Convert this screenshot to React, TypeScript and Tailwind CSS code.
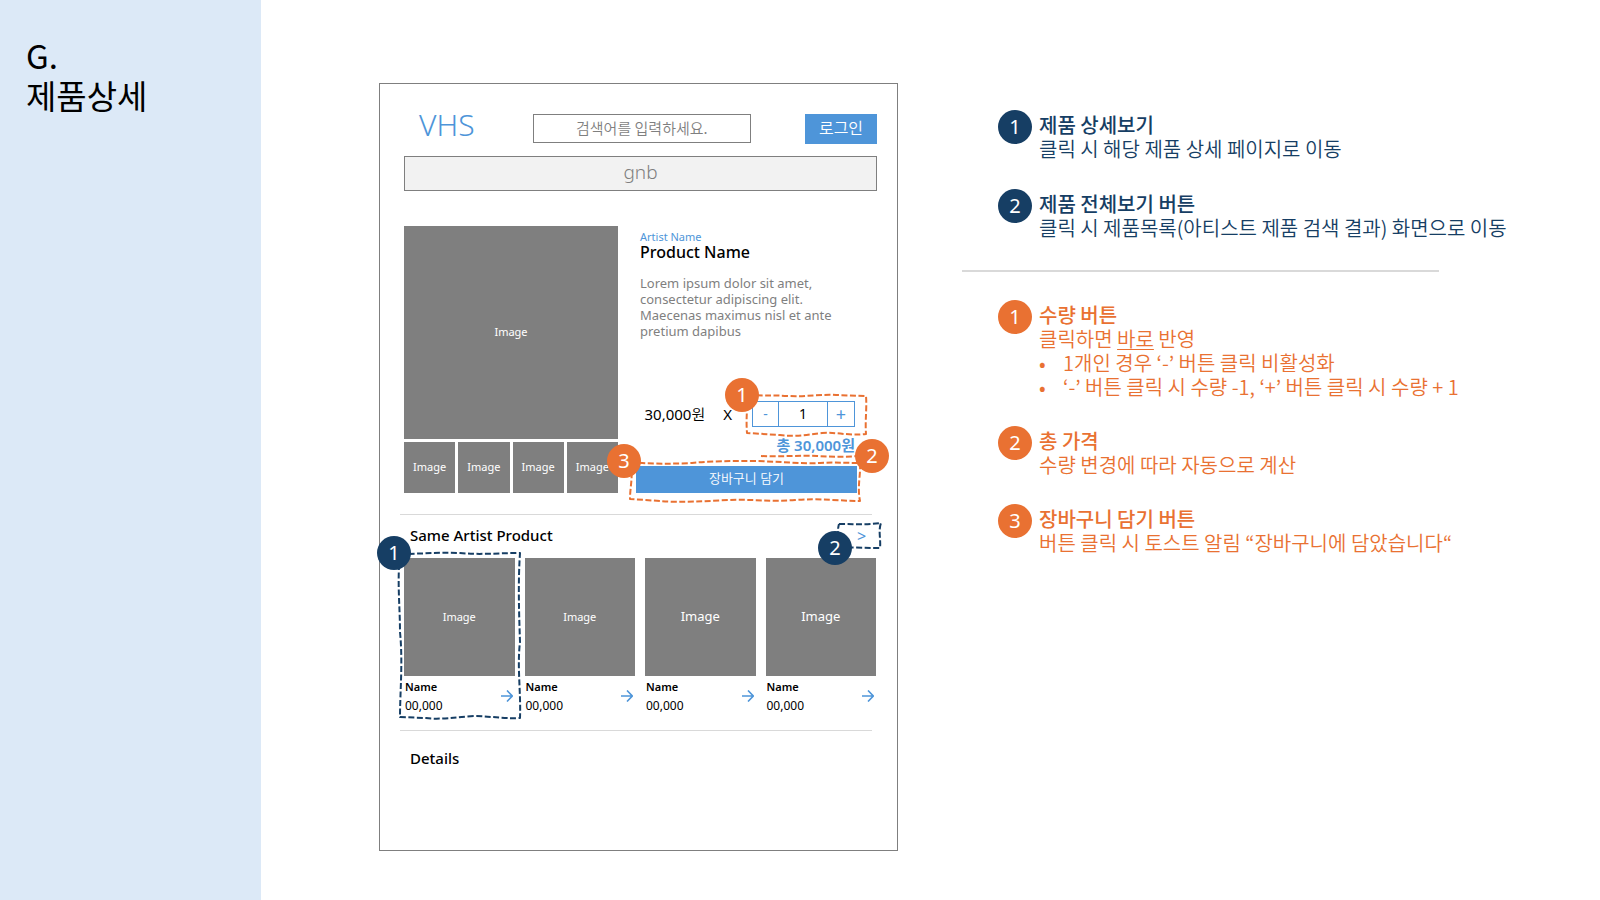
import type { ReactNode } from "react";

type Tone = "navy" | "orange";

const toneBg: Record<Tone, string> = { navy: "bg-[#163e64]", orange: "bg-[#e97132]" };
const toneText: Record<Tone, string> = { navy: "text-[#163e64]", orange: "text-[#e97132]" };
const latin = "font-['Noto_Sans','Noto_Sans_CJK_KR',sans-serif]";

function Badge({ n, tone, className = "" }: { n: number; tone: Tone; className?: string }) {
  return (
    <span
      className={`flex size-[34px] shrink-0 items-center justify-center rounded-full text-xl leading-none font-normal text-white ${latin} ${toneBg[tone]} ${className}`}
    >
      {n}
    </span>
  );
}

/* Hand-drawn dashed outline laid over the element it annotates. */
function Sketch({ d, w, h, tone, className }: { d: string; w: number; h: number; tone: Tone; className: string }) {
  return (
    <svg
      aria-hidden="true"
      viewBox={`0 0 ${w} ${h}`}
      preserveAspectRatio="none"
      className={`pointer-events-none absolute overflow-visible ${toneText[tone]} ${className}`}
    >
      <path d={d} fill="none" stroke="currentColor" strokeWidth="2" strokeDasharray="6 2.5" strokeLinejoin="round" />
    </svg>
  );
}

function Placeholder({ className = "" }: { className?: string }) {
  return <div className={`flex items-center justify-center bg-[#7f7f7f] text-white ${className}`}>Image</div>;
}

function Arrow() {
  return (
    <svg aria-hidden="true" viewBox="0 0 12 12" className="mr-px mb-[2px] size-3 text-[#4e95d9]">
      <path d="M0 6H11M6 0.5L11.3 6L6 11.5" fill="none" stroke="currentColor" strokeWidth="1.6" />
    </svg>
  );
}

function Note({ n, tone, title, children }: { n: number; tone: Tone; title: string; children: ReactNode }) {
  return (
    <li className={`flex items-start gap-[7px] ${toneText[tone]}`}>
      <Badge n={n} tone={tone} className="-mt-[3px]" />
      <div>
        <h3 className="font-medium">{title}</h3>
        {children}
      </div>
    </li>
  );
}

function Wireframe() {
  return (
    <section className="min-h-[768px] w-full max-w-[519px] border border-[#7f7f7f] bg-white pt-[30px] pr-5 pb-16 pl-6">
      <header className="flex items-start justify-between">
        <a href="#home" className={`ml-[15px] text-3xl leading-[22px] font-light text-[#4e95d9] ${latin}`}>
          VHS
        </a>
        <input
          aria-label="검색"
          placeholder="검색어를 입력하세요."
          className="ml-1 h-[29px] w-[218px] border border-[#7f7f7f] pb-[2px] text-center text-[15px] font-[350] placeholder:text-[#7f7f7f] placeholder:opacity-100"
        />
        <button className="h-[30px] w-[72px] bg-[#4e95d9] pb-1 text-base leading-6 font-[350] text-white">로그인</button>
      </header>
      <nav
        className={`mt-3 flex h-[35px] items-center justify-center border border-[#7f7f7f] bg-[#f2f2f2] pb-[2px] text-[19px] leading-none font-light text-[#7f7f7f] ${latin}`}
      >
        gnb
      </nav>

      <div className={`mt-[35px] flex gap-[18px] pr-5 ${latin}`}>
        <div className="flex w-[214px] shrink-0 flex-col gap-[3px] text-[11px]">
          <Placeholder className="h-[213px]" />
          <div className="grid grid-cols-4 gap-[3px]">
            <Placeholder className="h-[51px]" />
            <Placeholder className="h-[51px]" />
            <Placeholder className="h-[51px]" />
            <Placeholder className="h-[51px]" />
          </div>
        </div>
        <div className="flex flex-1 flex-col pt-1">
          <div className="pl-1">
            <p className="text-[11px] leading-[14px] text-[#4e95d9]">Artist Name</p>
            <h1 className="text-base leading-4 font-medium text-black">Product Name</h1>
            <p className="mt-[15px] max-w-[200px] text-[13px] leading-4 text-[#7f7f7f]">
              Lorem ipsum dolor sit amet, consectetur adipiscing elit. Maecenas maximus nisl et ante pretium dapibus
            </p>
          </div>
          <div className="mt-auto flex h-[26px] items-center justify-end pr-[2px] text-[15px] text-black">
            <span className="mr-[18px] font-[350]">
              <span className="font-normal">30,000</span>원
            </span>
            <span className="mr-5">X</span>
            <div className="relative flex h-[26px] border border-[#4e95d9] text-sm">
              <button aria-label="수량 감소" className="w-[25px] text-[#4e95d9]">
                -
              </button>
              <output className="flex w-[50px] items-center justify-center border-x border-[#4e95d9]">1</output>
              <button aria-label="수량 증가" className="w-[26px] text-lg leading-none text-[#4e95d9]">
                +
              </button>
              <Sketch
                tone="orange"
                w={121}
                h={42}
                className="-top-2 -left-[7px] h-[42px] w-[121px]"
                d="M2 1C20 2 28 1 42 2C60 3 75 0 90 1L120 2C121 14 119 26 120 40C102 42 92 38 76 39C60 41 50 43 34 41L1 39C0 26 1 16 2 1"
              />
              <Badge n={1} tone="orange" className="absolute -top-6 -left-7" />
            </div>
          </div>
          <p className="relative mt-2 self-end pr-[2px] text-[15px] leading-5 font-semibold text-[#4e95d9]">
            총 30,000원
            <Sketch
              tone="orange"
              w={100}
              h={4}
              className="-right-1 -bottom-[3px] h-1 w-[100px]"
              d="M0 2C20 3 40 1 56 2C72 3 84 3 100 2"
            />
            <Badge n={2} tone="orange" className="absolute top-1 -right-8 z-10" />
          </p>
          <div className="relative mt-[11px]">
            <button className="block h-[27px] w-full bg-[#4e95d9] pb-[2px] text-[13px] font-[350] text-white">
              장바구니 담기
            </button>
            <Sketch
              tone="orange"
              w={231}
              h={41}
              className="-top-[5px] -left-[6px] h-[41px] w-[231px]"
              d="M1 1C20 3 40 3 62 2C80 0 100 0 120 0C145 0 170 3 190 2C205 1 215 2 230 2C231 12 227 26 230 40C210 40 190 37 165 39C140 41 120 38 100 39C75 40 50 42 30 40L0 38C0 26 3 18 1 1"
            />
            <Badge n={3} tone="orange" className="absolute -top-[22px] -left-[29px]" />
          </div>
        </div>
      </div>

      <hr className="mt-[21px] mr-[5px] -ml-1 border-[#d9d9d9]" />

      <div className="mt-2 flex h-[25px] items-center justify-between">
        <h2 className={`ml-[6px] text-[15px] font-medium text-black ${latin}`}>Same Artist Product</h2>
        <div className="relative z-10 -mr-1 flex h-[25px] w-[43px]">
          <button aria-label="제품 전체보기" className={`w-full pl-1 text-base leading-none text-[#4e95d9] ${latin}`}>
            &gt;
          </button>
          <Sketch tone="navy" w={43} h={25} className="inset-0 size-full" d="M1 1C15 1 28 2 43 0C40 8 43 16 42 25C28 25 14 24 1 25C0 16 -1 8 1 1" />
          <Badge n={2} tone="navy" className="absolute top-2 -left-5" />
        </div>
      </div>

      <div className={`mt-[10px] mr-px grid grid-cols-4 gap-[10px] ${latin}`}>
        {[0, 1, 2, 3].map((i) => (
          <a key={i} href="#product" className="relative block text-black">
            <Placeholder className={`h-[118px] ${i < 2 ? "text-[11px]" : "text-[13px]"}`} />
            <div className="flex items-center justify-between px-px pt-1">
              <div>
                <p className="text-[11px] leading-[14px] font-semibold">Name</p>
                <p className="mt-[5px] text-xs leading-[14px]">00,000</p>
              </div>
              <Arrow />
            </div>
            {i === 0 && (
              <>
                <Sketch
                  tone="navy"
                  w={123}
                  h={165}
                  className="-top-[6px] -left-[6px] h-[165px] w-[123px]"
                  d="M2 2C22 2 40 0 62 1C82 3 100 1 122 1C120 30 121 60 122 90C119 115 123 140 122 166C104 167 92 164 76 164C58 165 42 168 28 166L2 165C2 140 5 110 2 80C2 54 -1 30 2 2"
                />
                <Badge n={1} tone="navy" className="absolute -top-[22px] -left-[27px]" />
              </>
            )}
          </a>
        ))}
      </div>

      <hr className="mt-[17px] mr-[5px] -ml-1 border-[#d9d9d9]" />
      <h2 className={`mt-4 ml-[6px] text-[15px] leading-[22px] font-medium text-black ${latin}`}>Details</h2>
    </section>
  );
}

export default function App() {
  return (
    <div className="flex min-h-screen bg-white font-['Noto_Sans_CJK_KR','Noto_Sans',sans-serif]">
      <aside className="w-[261px] shrink-0 bg-[#dce9f7] px-[26px] pt-[35px] text-[33px] leading-10 text-black">
        <h1>
          G.
          <br />
          제품상세
        </h1>
      </aside>
      <main className="flex flex-1 items-start gap-16 pt-[83px] pl-[118px]">
        <Wireframe />
        <div className="flex-1 shrink-0 pt-[30px] text-xl leading-6 font-[350] whitespace-nowrap">
          <ul className="flex flex-col gap-[31px] pl-9">
            <Note n={1} tone="navy" title="제품 상세보기">
              <p>클릭 시 해당 제품 상세 페이지로 이동</p>
            </Note>
            <Note n={2} tone="navy" title="제품 전체보기 버튼">
              <p>클릭 시 제품목록(아티스트 제품 검색 결과) 화면으로 이동</p>
            </Note>
          </ul>
          <hr className="mt-[30px] w-[477px] border-t-2 border-[#d9d9d9]" />
          <ul className="mt-[31px] flex flex-col gap-[30px] pl-9">
            <Note n={1} tone="orange" title="수량 버튼">
              <p>
                클릭하면 <span className="underline decoration-1 underline-offset-2">바로</span> 반영
              </p>
              <ul className="list-none">
                <li className="flex">
                  <span className="w-6">•</span>1개인 경우 ‘-’ 버튼 클릭 비활성화
                </li>
                <li className="flex">
                  <span className="w-6">•</span>‘-’ 버튼 클릭 시 수량 -1, ‘+’ 버튼 클릭 시 수량 + 1
                </li>
              </ul>
            </Note>
            <Note n={2} tone="orange" title="총 가격">
              <p>수량 변경에 따라 자동으로 계산</p>
            </Note>
            <Note n={3} tone="orange" title="장바구니 담기 버튼">
              <p>버튼 클릭 시 토스트 알림 “장바구니에 담았습니다“</p>
            </Note>
          </ul>
        </div>
      </main>
    </div>
  );
}
